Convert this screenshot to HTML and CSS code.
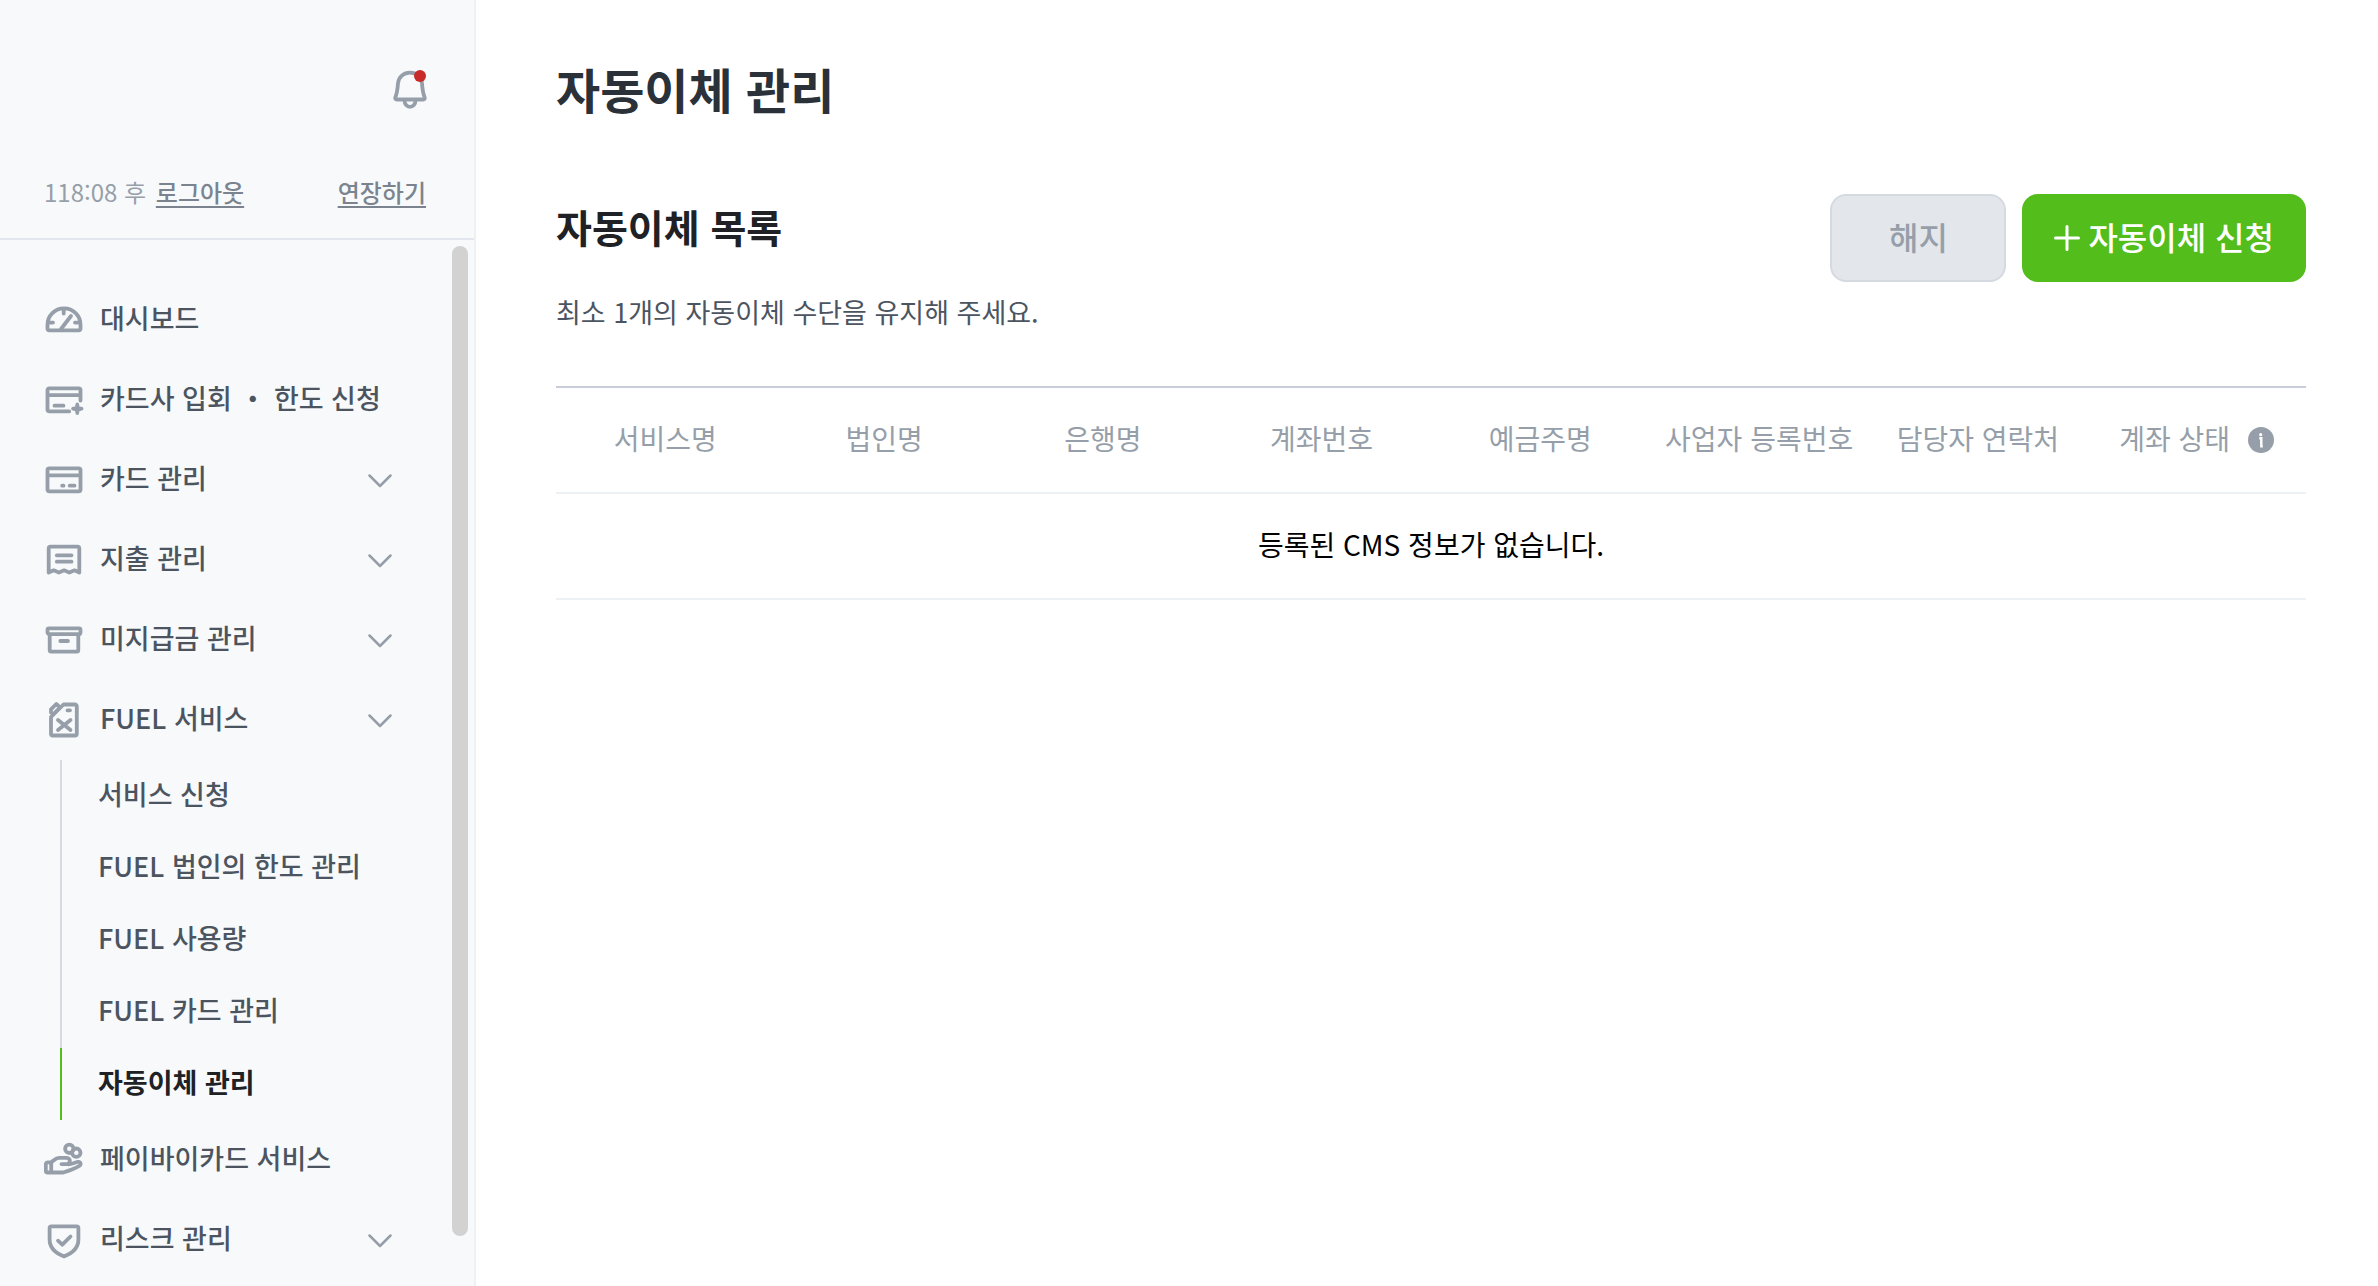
FILE: index.html
```html
<!DOCTYPE html>
<html lang="ko">
<head>
    <meta charset="UTF-8">
    <meta name="viewport" content="width=device-width, initial-scale=1.0">
    <title>자동이체 관리</title>
    <link rel="stylesheet" href="styles.css">
</head>
<body>
    <aside class="sidebar">
        <div class="sidebar-top">
            <button class="bell-btn" type="button" aria-label="알림">
                <svg class="icon" viewBox="0 0 40 40">
                    <path d="M20 2.700c-6.500 0-11.300 4.500-12 10.500-.4 6.300-.8 9.600-2.600 14.100-.5 1.300.1 2.200 1.400 2.200h26.400c1.300 0 1.900-.9 1.400-2.200-1.800-4.500-2.200-7.800-2.600-14.100C31.300 7.200 26.500 2.700 20 2.700z"/>
                    <path d="M14.500 30.500a5.500 6.300 0 0 0 11 0"/>
                    <circle class="dot" cx="30" cy="6" r="6"/>
                </svg>
            </button>
        </div>
        <div class="session">
            <span class="timer">118:08 후 <a href="#">로그아웃</a></span>
            <a href="#">연장하기</a>
        </div>

        <div class="nav-area">
            <nav class="nav">
                <a class="nav-item" href="#">
                    <svg class="icon" viewBox="0 0 40 40">
                        <path d="M3.500 24.800a16.500 16.500 0 0 1 33 0v4a1.500 1.500 0 0 1-1.500 1.500H5a1.500 1.500 0 0 1-1.500-1.500z"/>
                        <path d="M19.700 9v4.500M4 22.600h5M31 22.600h5M17 29l10-13"/>
                    </svg>
                    <span>대시보드</span>
                </a>
                <a class="nav-item" href="#">
                    <svg class="icon" viewBox="0 0 40 40">
                        <path d="M36.500 20.500V10a1.700 1.700 0 0 0-1.700-1.700H5.200A1.700 1.700 0 0 0 3.500 10v19.700a1.700 1.700 0 0 0 1.700 1.700h20M4 15.200h32M10.500 25.700h9"/>
                        <path class="fill" d="M33.300 22.500c1.500 0 1.900 1.300 2.100 4 2.700.2 4 .7 4 2.200s-1.300 2-4 2.200c-.2 2.700-.6 4-2.100 4s-1.900-1.300-2.100-4c-2.700-.2-4-.7-4-2.200s1.300-2 4-2.200c.2-2.700.6-4 2.100-4z"/>
                    </svg>
                    <span>카드사 입회 ・ 한도 신청</span>
                </a>
                <button class="nav-item" type="button" aria-expanded="false">
                    <svg class="icon" viewBox="0 0 40 40">
                        <rect x="3.500" y="8.300" width="33" height="23" rx="1.700"/>
                        <path d="M4 15.300h32M18.200 25.700h1.300M25.700 25.700h4.800"/>
                    </svg>
                    <span>카드 관리</span>
                    <svg class="chevron" viewBox="0 0 24 14"><path d="M1.500 1.500L12 12 22.500 1.500"/></svg>
                </button>
                <button class="nav-item" type="button" aria-expanded="false">
                    <svg class="icon" viewBox="0 0 40 40">
                        <path d="M4.700 32.500V8.500a1.800 1.800 0 0 1 1.800-1.800h27a1.800 1.800 0 0 1 1.800 1.800v24l-4.800-2.200-5.200 2.200-5.200-2.200-5.200 2.200-5.200-2.200z"/>
                        <path d="M12.800 15.300h14.700M12.800 21.700h14.700"/>
                    </svg>
                    <span>지출 관리</span>
                    <svg class="chevron" viewBox="0 0 24 14"><path d="M1.500 1.500L12 12 22.500 1.500"/></svg>
                </button>
                <button class="nav-item" type="button" aria-expanded="false">
                    <svg class="icon" viewBox="0 0 40 40">
                        <path d="M5 8.300h30a1.500 1.500 0 0 1 1.500 1.500v2.400a2 2 0 0 1-2 2h-29a2 2 0 0 1-2-2V9.800A1.500 1.500 0 0 1 5 8.300z"/>
                        <path d="M5.700 15v15a1.600 1.600 0 0 0 1.600 1.600h25.400a1.600 1.600 0 0 0 1.600-1.600V15M16.300 21h7.700"/>
                    </svg>
                    <span>미지급금 관리</span>
                    <svg class="chevron" viewBox="0 0 24 14"><path d="M1.500 1.500L12 12 22.500 1.500"/></svg>
                </button>
                <button class="nav-item" type="button" aria-expanded="true">
                    <svg class="icon" viewBox="0 0 40 40">
                        <path d="M7 17L19.500 4.500H31a1.800 1.800 0 0 1 1.800 1.800v27.400a1.800 1.800 0 0 1-1.800 1.800H8.800A1.800 1.800 0 0 1 7 33.700z"/>
                        <path d="M12.300 4L7 9.300v3.200l2.500 1.500L16 7.500z"/>
                        <path d="M23.500 10.300h2.500M14 20l12.500 10M26.500 20L14 30"/>
                    </svg>
                    <span>FUEL 서비스</span>
                    <svg class="chevron" viewBox="0 0 24 14"><path d="M1.500 1.500L12 12 22.500 1.500"/></svg>
                </button>
                <ul class="submenu">
                    <li><a href="#">서비스 신청</a></li>
                    <li><a href="#">FUEL 법인의 한도 관리</a></li>
                    <li><a href="#">FUEL 사용량</a></li>
                    <li><a href="#">FUEL 카드 관리</a></li>
                    <li><a class="active" href="#">자동이체 관리</a></li>
                </ul>
                <a class="nav-item" href="#">
                    <svg class="icon" viewBox="0 0 40 40">
                        <circle cx="25.300" cy="8.800" r="4.200"/>
                        <circle cx="32.300" cy="12.700" r="4.200"/>
                        <path d="M7 22.500c3.500-2.500 4.800-4.600 8-4.600h7.500c2.500 0 4 2 3 4.200-.5 1.300-1.500 2-3 2h-5M24.500 24.300c3.500 0 6.500-2 9.300-2.400 3-.4 3.700 2.600 1.500 4-4 2.400-9.500 4.600-16 6.600H3.500A1.700 1.700 0 0 1 1.800 31v-6.500a2.200 2.200 0 0 1 2.200-2.200h3M7.200 22.500v10"/>
                    </svg>
                    <span>페이바이카드 서비스</span>
                </a>
                <button class="nav-item" type="button" aria-expanded="false">
                    <svg class="icon" viewBox="0 0 40 40">
                        <path d="M7.400 6.400h25.200a1.800 1.800 0 0 1 1.800 1.800v11.300c0 8-5.400 13.500-14.400 16.900C11 33 5.600 27.500 5.600 19.500V8.200a1.800 1.800 0 0 1 1.800-1.800z"/>
                        <path d="M14 20.700l4.300 4L26.500 16.500"/>
                    </svg>
                    <span>리스크 관리</span>
                    <svg class="chevron" viewBox="0 0 24 14"><path d="M1.500 1.500L12 12 22.500 1.500"/></svg>
                </button>
            </nav>
            <div class="scroll-thumb"></div>
        </div>
    </aside>

    <main class="content">
        <h1>자동이체 관리</h1>
        <section>
            <div class="list-header">
                <div>
                    <h2>자동이체 목록</h2>
                    <p>최소 1개의 자동이체 수단을 유지해 주세요.</p>
                </div>
                <div class="buttons">
                    <button class="cancel-btn" type="button" disabled>해지</button>
                    <button class="apply-btn" type="button">
                        <svg class="plus" viewBox="0 0 26 26"><path d="M13 1.500v23M1.500 13h23"/></svg>
                        자동이체 신청
                    </button>
                </div>
            </div>
            <table class="cms-table">
                <thead>
                    <tr>
                        <th>서비스명</th>
                        <th>법인명</th>
                        <th>은행명</th>
                        <th>계좌번호</th>
                        <th>예금주명</th>
                        <th>사업자 등록번호</th>
                        <th>담당자 연락처</th>
                        <th>
                            <span class="th-info">
                                계좌 상태
                                <svg class="info" viewBox="0 0 26 26">
                                    <circle cx="13" cy="13" r="13"/>
                                    <circle class="mark" cx="12.700" cy="7.700" r="1.600"/>
                                    <path class="stem" d="M11.300 11.300h2v8h1.500"/>
                                </svg>
                            </span>
                        </th>
                    </tr>
                </thead>
                <tbody>
                    <tr>
                        <td colspan="8">등록된 CMS 정보가 없습니다.</td>
                    </tr>
                </tbody>
            </table>
        </section>
    </main>
</body>
</html>
```

FILE: styles.css
```css
* {
    box-sizing: border-box;
}

body {
    display: flex;
    height: 100vh;
    margin: 0;
    font-family: "Noto Sans CJK KR", "Noto Sans KR", sans-serif;
    background-color: #fff;
    color: #000;
}

a {
    color: inherit;
}

button {
    font-family: inherit;
    cursor: pointer;
}

h1, h2, p, ul {
    margin: 0;
    padding: 0;
}

/* Sidebar */
.sidebar {
    display: flex;
    flex-direction: column;
    flex: 0 0 476px;
    overflow: hidden;
    background-color: #f7f9fb;
    border-right: 2px solid #eef1f4;
}

.sidebar-top {
    display: flex;
    justify-content: flex-end;
    padding: 70px 44px 0;
}

.bell-btn {
    display: flex;
    padding: 0;
    border: none;
    background: none;
}

.icon {
    flex: none;
    width: 40px;
    height: 40px;
    fill: none;
    stroke: #969fa9;
    stroke-width: 3.8;
    stroke-linecap: round;
    stroke-linejoin: round;
}

.icon .fill {
    fill: #969fa9;
    stroke: none;
}

.icon .dot {
    fill: #c92a2a;
    stroke: none;
}

.session {
    display: flex;
    justify-content: space-between;
    padding: 64px 48px 28px 44px;
    border-bottom: 2px solid #e3e6ed;
    font-size: 24px;
    line-height: 36px;
    color: #969fa9;
}

.session a {
    font-weight: 500;
    color: #7b848e;
    text-decoration-thickness: 2px;
    text-underline-offset: 4px;
}

.timer a {
    margin-left: 3px;
}

.nav-area {
    display: flex;
    flex: 1;
    min-height: 0;
    padding: 6px 6px 0 0;
}

.nav {
    flex: 1;
    padding-top: 34px;
}

.nav-item {
    display: flex;
    align-items: center;
    gap: 16px;
    width: 100%;
    height: 80px;
    padding: 0 60px 0 44px;
    border: none;
    background: none;
    font-size: 27px;
    font-weight: 500;
    text-align: left;
    text-decoration: none;
    color: #4c555f;
}

.nav-item span {
    flex: 1;
    padding-bottom: 6px;
    white-space: nowrap;
}

.chevron {
    width: 24px;
    height: 14px;
    margin-top: 2px;
    fill: none;
    stroke: #969fa9;
    stroke-width: 2.5;
    stroke-linecap: round;
    stroke-linejoin: round;
}

.submenu {
    margin-left: 60px;
    list-style: none;
}

.submenu a {
    display: block;
    height: 72px;
    padding-left: 36px;
    border-left: 2px solid #d5dbe1;
    font-size: 27px;
    font-weight: 500;
    line-height: 68px;
    text-decoration: none;
    color: #4c555f;
}

.submenu a.active {
    border-left-color: #53bd1c;
    font-weight: 700;
    color: #202124;
}

.scroll-thumb {
    width: 16px;
    height: calc(100% - 50px);
    border-radius: 8px;
    background-color: #d2d2d2;
}

/* Content */
.content {
    flex: 1;
    padding: 52px 72px 0 80px;
}

h1 {
    font-size: 48px;
    font-weight: 700;
    line-height: 72px;
    color: #2b3139;
}

.list-header {
    display: flex;
    justify-content: space-between;
    margin-top: 70px;
    height: 192px;
}

h2 {
    padding-top: 2px;
    font-size: 39px;
    font-weight: 700;
    line-height: 60px;
    color: #202124;
}

.list-header p {
    margin-top: 36px;
    font-size: 27px;
    line-height: 40px;
    color: #4c555f;
}

.buttons {
    display: flex;
    align-items: flex-start;
    gap: 16px;
}

.buttons button {
    display: flex;
    align-items: center;
    justify-content: center;
    gap: 8px;
    height: 88px;
    padding: 0 30px 4px;
    border: 2px solid #53bd1c;
    border-radius: 16px;
    font-size: 32px;
    font-weight: 500;
}

.buttons .cancel-btn {
    width: 176px;
    border-color: #d5dae0;
    background-color: #e3e7ec;
    color: #969fa9;
    cursor: default;
}

.buttons .apply-btn {
    background-color: #53bd1c;
    color: #fff;
}

.plus {
    width: 26px;
    height: 26px;
    margin-top: 4px;
    fill: none;
    stroke: #fff;
    stroke-width: 3;
    stroke-linecap: round;
}

.cms-table {
    width: 100%;
    table-layout: fixed;
    border-collapse: collapse;
    border-top: 2px solid #c8cdd9;
    font-size: 28px;
}

.cms-table th,
.cms-table td {
    height: 106px;
    padding: 0 0 4px;
    border-bottom: 2px solid #eef1f4;
    text-align: center;
    font-weight: 400;
    white-space: nowrap;
}

.cms-table th {
    color: #969fa9;
}

.th-info {
    display: inline-flex;
    align-items: center;
    gap: 18px;
}

.info {
    width: 26px;
    height: 26px;
    margin-top: 4px;
    fill: #969fa9;
}

.info .mark {
    fill: #fff;
}

.info .stem {
    fill: none;
    stroke: #fff;
    stroke-width: 2.4;
}
```
